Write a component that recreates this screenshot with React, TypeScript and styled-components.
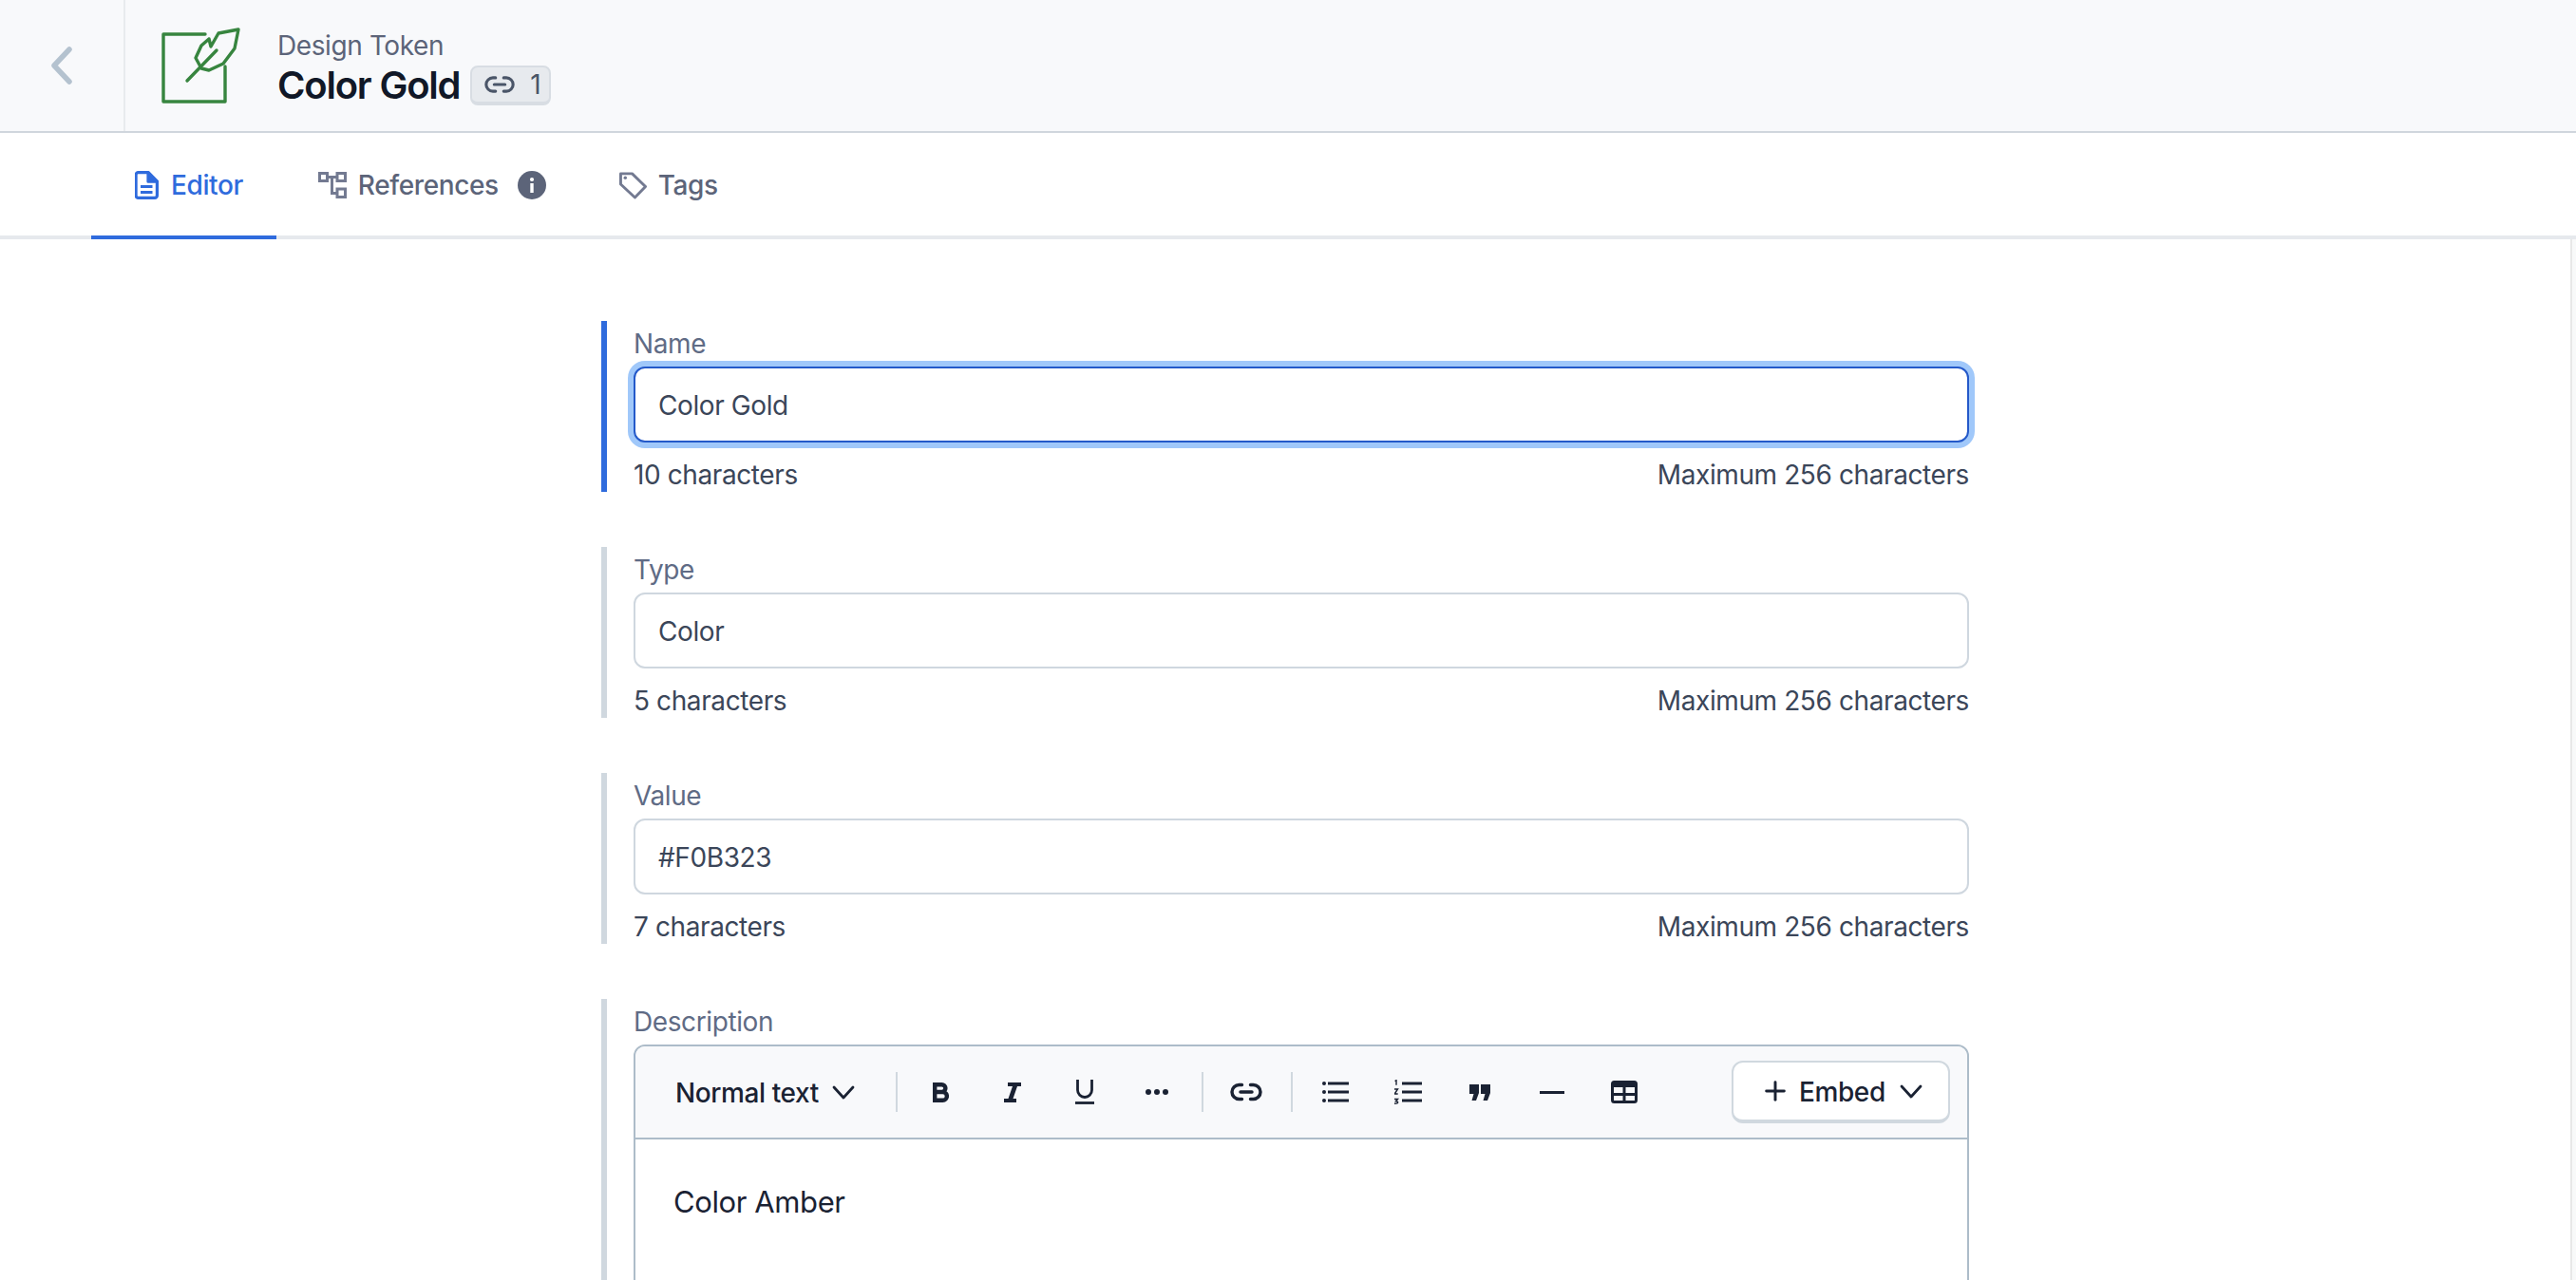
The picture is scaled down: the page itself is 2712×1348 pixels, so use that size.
import React from 'react';
import styled, { createGlobalStyle } from 'styled-components';
import { Link2, Plus } from 'lucide-react';

const GlobalStyle = createGlobalStyle`
  html, body {
    margin: 0;
    height: 100%;
    overflow: hidden;
    background: #fff;
  }
  body {
    font-family: Inter, "Liberation Sans", sans-serif;
    font-size: 28px;
    letter-spacing: -0.4px;
    color: #1a2233;
  }
  * {
    box-sizing: border-box;
  }
`;

const FIELDS = [
  { label: 'Name', value: 'Color Gold', count: '10 characters', active: true },
  { label: 'Type', value: 'Color', count: '5 characters', active: false },
  { label: 'Value', value: '#F0B323', count: '7 characters', active: false },
];

function FeatherIcon() {
  return (
    <svg width="84" height="82" viewBox="-2 -2 84 82" fill="none" stroke="#37853f" strokeWidth="3.4" strokeLinecap="round" strokeLinejoin="round">
      <path d="M44 6H0v71h65V40" />
      <path d="M79 1 58 5 54 12 50 19 48 11 40 18 34 31 40 42 48 44 63 37 75 21Z" />
      <path d="M25 55 56 23" />
    </svg>
  );
}

function BackChevron() {
  return (
    <svg width="24" height="40" viewBox="0 0 24 40" fill="none" stroke="#b4c2cf" strokeWidth="5.5" strokeLinecap="round" strokeLinejoin="round">
      <path d="M20 3 4 20l16 17" />
    </svg>
  );
}

function SmallChevron() {
  return (
    <svg width="24" height="15" viewBox="0 0 24 15" fill="none" stroke="#1a2233" strokeWidth="2.8" strokeLinecap="round" strokeLinejoin="round">
      <path d="M2 2l10 11L22 2" />
    </svg>
  );
}

function DocIcon() {
  return (
    <svg width="26" height="30" viewBox="0 0 26 30" fill="none" stroke="currentColor" strokeWidth="3.2" strokeLinejoin="round">
      <path d="M3.500 1.600h10.500l9.400 9.600v14.800a2.400 2.400 0 0 1-2.400 2.400H3.500a2.400 2.400 0 0 1-2.400-2.400V4a2.400 2.400 0 0 1 2.400-2.400Z" />
      <path d="M14 1.600l9.400 9.600H14Z" fill="currentColor" />
      <path d="M6 16.500h12.500M6 22.500h12.500" />
    </svg>
  );
}

function RefsIcon() {
  return (
    <svg width="30" height="30" viewBox="0 0 30 30" fill="none" stroke="#737a91" strokeWidth="3">
      <rect x="1.500" y="2.500" width="8" height="8" />
      <rect x="20" y="2.500" width="8.500" height="8" />
      <rect x="20" y="19" width="8.500" height="8.500" />
      <path d="M9.500 6.500H20M14.500 6.500v17H20" />
    </svg>
  );
}

function InfoIcon() {
  return (
    <svg width="30" height="30" viewBox="0 0 30 30">
      <circle cx="15" cy="15" r="15" fill="#5c6479" />
      <rect x="13.300" y="13" width="3.400" height="10" fill="#fff" />
      <circle cx="15" cy="9" r="2.100" fill="#fff" />
    </svg>
  );
}

function TagIcon() {
  return (
    <svg width="29" height="30" viewBox="0 0 30 30" fill="none" stroke="#737a91" strokeWidth="3" strokeLinejoin="round">
      <path d="M1.500 2.500h12.500l14.500 14L17 28.500 1.500 14Z" />
      <circle cx="6.500" cy="7" r="1.800" fill="#737a91" stroke="none" />
    </svg>
  );
}

function BoldIcon() {
  return (
    <svg width="17" height="21" viewBox="0 0 17 21" fill="none" stroke="#1a2233" strokeWidth="4.400">
      <path d="M2.200 2.200h7.300a3.900 3.900 0 0 1 0 7.800H2.200h8.300a4.400 4.400 0 0 1 0 8.800H2.200V0" />
    </svg>
  );
}

function ItalicIcon() {
  return (
    <svg width="18" height="21" viewBox="0 0 18 21" fill="#1a2233">
      <path d="M4 0h14v4h-4L9.500 17H13v4H0v-4h4.500L9 4H4Z" />
    </svg>
  );
}

function UnderlineIcon() {
  return (
    <svg width="20" height="26" viewBox="0 0 20 26" fill="none" stroke="#1a2233" strokeWidth="2.800">
      <path d="M2.500 0v11a7.500 7.500 0 0 0 15 0V0" />
      <path d="M0 24.500h20" />
    </svg>
  );
}

function MoreIcon() {
  return (
    <svg width="24" height="8" viewBox="0 0 24 8" fill="#1a2233">
      <circle cx="3" cy="4" r="3" />
      <circle cx="12" cy="4" r="3" />
      <circle cx="21" cy="4" r="3" />
    </svg>
  );
}

function BulletIcon() {
  return (
    <svg width="28" height="24" viewBox="0 0 28 24" fill="#1a2233">
      <circle cx="2" cy="3" r="2" />
      <circle cx="2" cy="12" r="2" />
      <circle cx="2" cy="21" r="2" />
      <rect x="6" y="1.500" width="22" height="3" />
      <rect x="6" y="10.500" width="22" height="3" />
      <rect x="6" y="19.500" width="22" height="3" />
    </svg>
  );
}

function OrderedIcon() {
  return (
    <svg width="29" height="26" viewBox="0 0 29 26" fill="none" stroke="#1a2233" strokeWidth="1.400">
      <path d="M0.500 1.500 2 .7v5" />
      <path d="M0 10h3.500L.2 15h3.500" />
      <path d="M0 20.500h3.500L1.500 22.800c1.500 0 2.200.5 2.200 1.300S2.800 25.300 0 25.300" />
      <path d="M8 4h21M8 13h21M8 22h21" strokeWidth="3" />
    </svg>
  );
}

function QuoteIcon() {
  return (
    <svg width="22" height="17" viewBox="0 0 22 17" fill="#1a2233">
      <path d="M0 0h10v9l-3 8H2.500l2-7H0Z" />
      <path d="M12 0h10v9l-3 8h-4.500l2-7H12Z" />
    </svg>
  );
}

function RuleIcon() {
  return (
    <svg width="26" height="3" viewBox="0 0 26 3">
      <rect width="26" height="3" fill="#1a2233" />
    </svg>
  );
}

function TableIcon() {
  return (
    <svg width="28" height="24" viewBox="0 0 28 24" fill="none" stroke="#1a2233" strokeWidth="3">
      <rect x="1.500" y="1.500" width="25" height="21" rx="2" />
      <path d="M1.500 4.500h25" strokeWidth="5" />
      <path d="M14 5v18M1.500 14.500h25" />
    </svg>
  );
}

function Toolbar() {
  return (
    <ToolbarBlock>
      <StyleSelect>
        <ToolbarLabel>Normal text</ToolbarLabel>
        <SmallChevron />
      </StyleSelect>
      <Separator />
      <ToolButton><BoldIcon /></ToolButton>
      <ToolButton><ItalicIcon /></ToolButton>
      <ToolButton><UnderlineIcon /></ToolButton>
      <ToolButton><MoreIcon /></ToolButton>
      <Separator />
      <ToolButton><Link2 size={36} strokeWidth={2.3} /></ToolButton>
      <Separator />
      <ToolButton><BulletIcon /></ToolButton>
      <ToolButton><OrderedIcon /></ToolButton>
      <ToolButton><QuoteIcon /></ToolButton>
      <ToolButton><RuleIcon /></ToolButton>
      <ToolButton><TableIcon /></ToolButton>
      <EmbedButton>
        <Plus size={32} strokeWidth={2.2} />
        <EmbedLabel>Embed</EmbedLabel>
        <SmallChevron />
      </EmbedButton>
    </ToolbarBlock>
  );
}

export default function App() {
  return (
    <>
      <GlobalStyle />
      <Page>
        <Header>
          <BackCell>
            <BackChevron />
          </BackCell>
          <TitleGroup>
            <FeatherIcon />
            <TitleText>
              <Kind>Design Token</Kind>
              <TitleRow>
                <Title>Color Gold</Title>
                <LinkBadge>
                  <Link2 size={34} strokeWidth={2.2} />1
                </LinkBadge>
              </TitleRow>
            </TitleText>
          </TitleGroup>
        </Header>
        <Tabs>
          <TabItem $active $lead>
            <DocIcon />
            Editor
          </TabItem>
          <TabItem>
            <RefsIcon />
            References
            <InfoSlot><InfoIcon /></InfoSlot>
          </TabItem>
          <TabItem>
            <TagIcon />
            Tags
          </TabItem>
        </Tabs>
        <Body>
          <Content>
            <Form>
              {FIELDS.map((field) => (
                <Field key={field.label} $active={field.active}>
                  <Label>{field.label}</Label>
                  <InputBox $active={field.active}>{field.value}</InputBox>
                  <HelpRow>
                    <span>{field.count}</span>
                    <span>Maximum 256 characters</span>
                  </HelpRow>
                </Field>
              ))}
              <DescriptionField>
                <Label>Description</Label>
                <Editor>
                  <Toolbar />
                  <EditorBody>Color Amber</EditorBody>
                </Editor>
              </DescriptionField>
            </Form>
          </Content>
          <ScrollTrack />
        </Body>
      </Page>
    </>
  );
}

const Page = styled.div`
  display: flex;
  flex-direction: column;
  height: 1348px;
  overflow: hidden;
`;

const Header = styled.header`
  display: flex;
  flex: none;
  height: 140px;
  background: #f8f9fb;
  border-bottom: 2px solid #d0d6dd;
`;

const BackCell = styled.div`
  display: flex;
  width: 132px;
  padding-left: 53px;
  align-items: center;
  border-right: 2px solid #e8ebee;
`;

const TitleGroup = styled.div`
  display: flex;
  padding-left: 38px;
  align-items: center;
  gap: 38px;
`;

const TitleText = styled.div`
  display: flex;
  padding-top: 6px;
  flex-direction: column;
`;

const Kind = styled.div`
  font-size: 28px;
  line-height: 36px;
  color: #5c6479;
`;

const TitleRow = styled.div`
  display: flex;
  align-items: center;
  gap: 11px;
`;

const Title = styled.h1`
  margin: 0;
  font-size: 40px;
  line-height: 48px;
  font-weight: 600;
  letter-spacing: -1.2px;
  color: #111827;
`;

const LinkBadge = styled.span`
  display: flex;
  height: 42px;
  padding: 0 9px 0 12px;
  align-items: center;
  gap: 15px;
  font-size: 28px;
  color: #4a5568;
  background: #e7eaee;
  border: 2px solid #d8dde3;
  border-bottom-width: 4px;
  border-radius: 8px;
`;

const Tabs = styled.nav`
  display: flex;
  flex: none;
  height: 112px;
  padding-left: 96px;
  border-bottom: 4px solid #e6e9ed;
`;

const TabItem = styled.div<{ $active?: boolean; $lead?: boolean }>`
  display: flex;
  height: 112px;
  padding: 2px ${(props) => (props.$lead ? '35px' : '33px')} 0 ${(props) => (props.$lead ? '46px' : '44px')};
  align-items: center;
  gap: 12px;
  font-size: 28px;
  font-weight: 500;
  color: ${(props) => (props.$active ? '#2f6bdd' : '#5c6479')};
  border-bottom: 4px solid ${(props) => (props.$active ? '#2f6bdd' : 'transparent')};
`;

const InfoSlot = styled.span`
  display: flex;
  margin-left: 8px;
`;

const Body = styled.div`
  display: flex;
  flex: 1;
  min-height: 0;
`;

const Content = styled.main`
  flex: 1;
  min-width: 0;
`;

const ScrollTrack = styled.div`
  flex: none;
  width: 6px;
  background: #f8f9f9;
  border-left: 2px solid #e8e8e8;
`;

const Form = styled.div`
  display: flex;
  width: 1440px;
  margin: 86px auto 0;
  flex-direction: column;
  gap: 58px;
`;

const Field = styled.section<{ $active?: boolean }>`
  height: 180px;
  padding-left: 28px;
  border-left: 6px solid ${(props) => (props.$active ? '#2f6bdd' : '#d0d8df')};
`;

const DescriptionField = styled(Field)`
  height: auto;
`;

const Label = styled.div`
  height: 48px;
  font-size: 28px;
  line-height: 48px;
  color: #5f6b85;
`;

const InputBox = styled.div<{ $active?: boolean }>`
  height: 80px;
  padding: 0 24px;
  font-size: 28px;
  line-height: 78px;
  color: #3b4659;
  background: #fff;
  border: 2px solid ${(props) => (props.$active ? '#2459c9' : '#cfd7df')};
  border-radius: 12px;
  box-shadow: ${(props) => (props.$active ? '0 0 0 6px #a0c8fa' : 'none')};
`;

const HelpRow = styled.div`
  display: flex;
  height: 52px;
  padding-top: 16px;
  justify-content: space-between;
  align-items: center;
  font-size: 28px;
  color: #3b4659;
`;

const Editor = styled.div`
  height: 400px;
  background: #fff;
  border: 2px solid #adbcc9;
  border-radius: 12px;
`;

const ToolbarBlock = styled.div`
  display: flex;
  height: 98px;
  padding: 0 18px 0 42px;
  align-items: center;
  background: #f8f9fb;
  border-bottom: 2px solid #adbcc9;
  border-radius: 10px 10px 0 0;
`;

const StyleSelect = styled.div`
  display: flex;
  width: 232px;
  align-items: center;
  gap: 14px;
  font-weight: 500;
  color: #1a2233;
`;

const ToolbarLabel = styled.span`
  padding-top: 2px;
`;

const EmbedLabel = styled(ToolbarLabel)`
  margin: 0 15px 0 9px;
`;

const Separator = styled.span`
  flex: none;
  width: 2px;
  height: 42px;
  margin: 0 7px 0 9px;
  background: #d0d8df;

  &:first-of-type {
    margin-left: 0;
  }
`;

const ToolButton = styled.span`
  display: flex;
  flex: none;
  width: 76px;
  justify-content: center;
  align-items: center;
  color: #1a2233;
`;

const EmbedButton = styled.div`
  display: flex;
  width: 230px;
  height: 66px;
  margin-left: auto;
  padding-left: 28px;
  align-items: center;
  font-weight: 500;
  color: #1a2233;
  background: #fff;
  border: 2px solid #d0d8df;
  border-bottom-width: 4px;
  border-radius: 12px;
`;

const EditorBody = styled.div`
  padding: 44px 40px;
  font-size: 31px;
  line-height: 44px;
  color: #1a2233;
`;
